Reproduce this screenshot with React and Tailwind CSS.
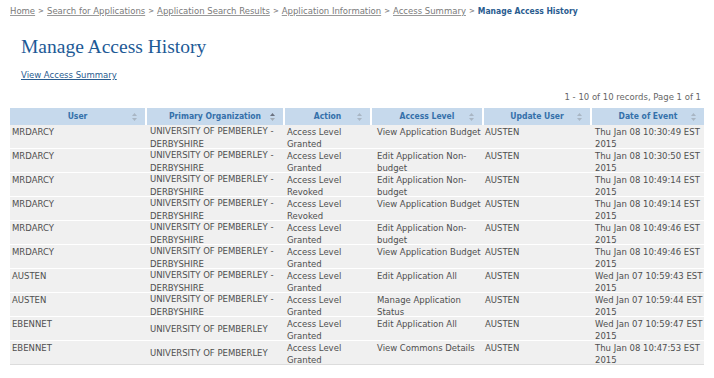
import React from 'react';

const crumbs = ['Home', 'Search for Applications', 'Application Search Results', 'Application Information', 'Access Summary'];

const columns = [
  { label: 'User', active: false },
  { label: 'Primary Organization', active: true },
  { label: 'Action', active: false },
  { label: 'Access Level', active: false },
  { label: 'Update User', active: false },
  { label: 'Date of Event', active: false },
];

const ORG_LONG = 'UNIVERSITY OF PEMBERLEY - DERBYSHIRE';
const ORG_SHORT = 'UNIVERSITY OF PEMBERLEY';

const rows = [
  ['MRDARCY', ORG_LONG, 'Access Level Granted', 'View Application Budget', 'AUSTEN', 'Thu Jan 08 10:30:49 EST 2015'],
  ['MRDARCY', ORG_LONG, 'Access Level Granted', 'Edit Application Non-budget', 'AUSTEN', 'Thu Jan 08 10:30:50 EST 2015'],
  ['MRDARCY', ORG_LONG, 'Access Level Revoked', 'Edit Application Non-budget', 'AUSTEN', 'Thu Jan 08 10:49:14 EST 2015'],
  ['MRDARCY', ORG_LONG, 'Access Level Revoked', 'View Application Budget', 'AUSTEN', 'Thu Jan 08 10:49:14 EST 2015'],
  ['MRDARCY', ORG_LONG, 'Access Level Granted', 'Edit Application Non-budget', 'AUSTEN', 'Thu Jan 08 10:49:46 EST 2015'],
  ['MRDARCY', ORG_LONG, 'Access Level Granted', 'View Application Budget', 'AUSTEN', 'Thu Jan 08 10:49:46 EST 2015'],
  ['AUSTEN', ORG_LONG, 'Access Level Granted', 'Edit Application All', 'AUSTEN', 'Wed Jan 07 10:59:43 EST 2015'],
  ['AUSTEN', ORG_LONG, 'Access Level Granted', 'Manage Application Status', 'AUSTEN', 'Wed Jan 07 10:59:44 EST 2015'],
  ['EBENNET', ORG_SHORT, 'Access Level Granted', 'Edit Application All', 'AUSTEN', 'Wed Jan 07 10:59:47 EST 2015'],
  ['EBENNET', ORG_SHORT, 'Access Level Granted', 'View Commons Details', 'AUSTEN', 'Thu Jan 08 10:47:53 EST 2015'],
];

const SortIcon = ({ active }) => (
  <svg width="5" height="8" viewBox="0 0 5 8" className="absolute right-[8px] top-[5px]">
    <path d="M2.5 0 L5 3 L0 3 Z" fill={active ? '#6b7280' : '#a9b6c4'} />
    <path d="M0 5 L5 5 L2.5 8 Z" fill={active ? '#a3acb6' : '#a9b6c4'} />
  </svg>
);

const App = () => {
  const grid = 'grid grid-cols-[137px_138px_87px_112px_108px_112px]';
  return (
    <div className="w-[714px] h-[378px] bg-white overflow-hidden font-['DejaVu_Sans',sans-serif] text-[8.5px]">
      <div className="pl-[10px] pt-[5px] flex items-center gap-[2px] text-[#7a7a7a] leading-[12px]">
        {crumbs.map((c) => (
          <React.Fragment key={c}>
            <span className="underline decoration-[#9a9a9a]">{c}</span>
            <span className="text-[#8a8a8a] text-[7px] font-bold px-[1px]">&gt;</span>
          </React.Fragment>
        ))}
        <span className="font-bold font-['DejaVu_Sans_Condensed','DejaVu_Sans',sans-serif] text-[#2a5c8f]">Manage Access History</span>
      </div>

      <h1 className="pl-[21px] mt-[18px] font-['Liberation_Serif',serif] text-[19.5px] leading-[24px] text-[#1d5a96]">
        Manage Access History
      </h1>

      <div className="pl-[21px] mt-[10px] leading-[12px]">
        <span className="text-[#2a5c8f] underline">View Access Summary</span>
      </div>

      <div className="mx-[10px] mt-[10px]">
        <div className="text-right pr-[3px] text-[#666] leading-[12px]">1 - 10 of 10 records, Page 1 of 1</div>
        <div className={`${grid} mt-[5px] bg-[#c6d9ec]`}>
          {columns.map((col, i) => (
            <div
              key={col.label}
              className={`relative h-[17px] flex items-center justify-center font-bold font-['DejaVu_Sans_Condensed','DejaVu_Sans',sans-serif] text-[#3470aa] ${i < columns.length - 1 ? 'border-r-2 border-white' : ''}`}
            >
              {col.label}
              <SortIcon active={col.active} />
            </div>
          ))}
        </div>
        {rows.map((r, idx) => (
          <div
            key={idx}
            className={`${grid} h-[24px] bg-[#f0f0f0] text-[#4f4f4f] leading-[11.5px] border-b ${idx === rows.length - 1 ? 'border-[#dcdcdc]' : 'border-white'}`}
          >
            <div className="pl-[2px] pt-[2px]">{r[0]}</div>
            <div className="pl-[3px] pr-[6px] flex items-center leading-[13px]">{r[1]}</div>
            <div className="pl-[2px] pt-[2px] pr-[2px]">{r[2]}</div>
            <div className="pl-[5px] pt-[2px] pr-[2px]">{r[3]}</div>
            <div className="pl-[1px] pt-[2px]">{r[4]}</div>
            <div className="pl-[3px] pt-[2px]">{r[5]}</div>
          </div>
        ))}
      </div>
    </div>
  );
};

export default App;
